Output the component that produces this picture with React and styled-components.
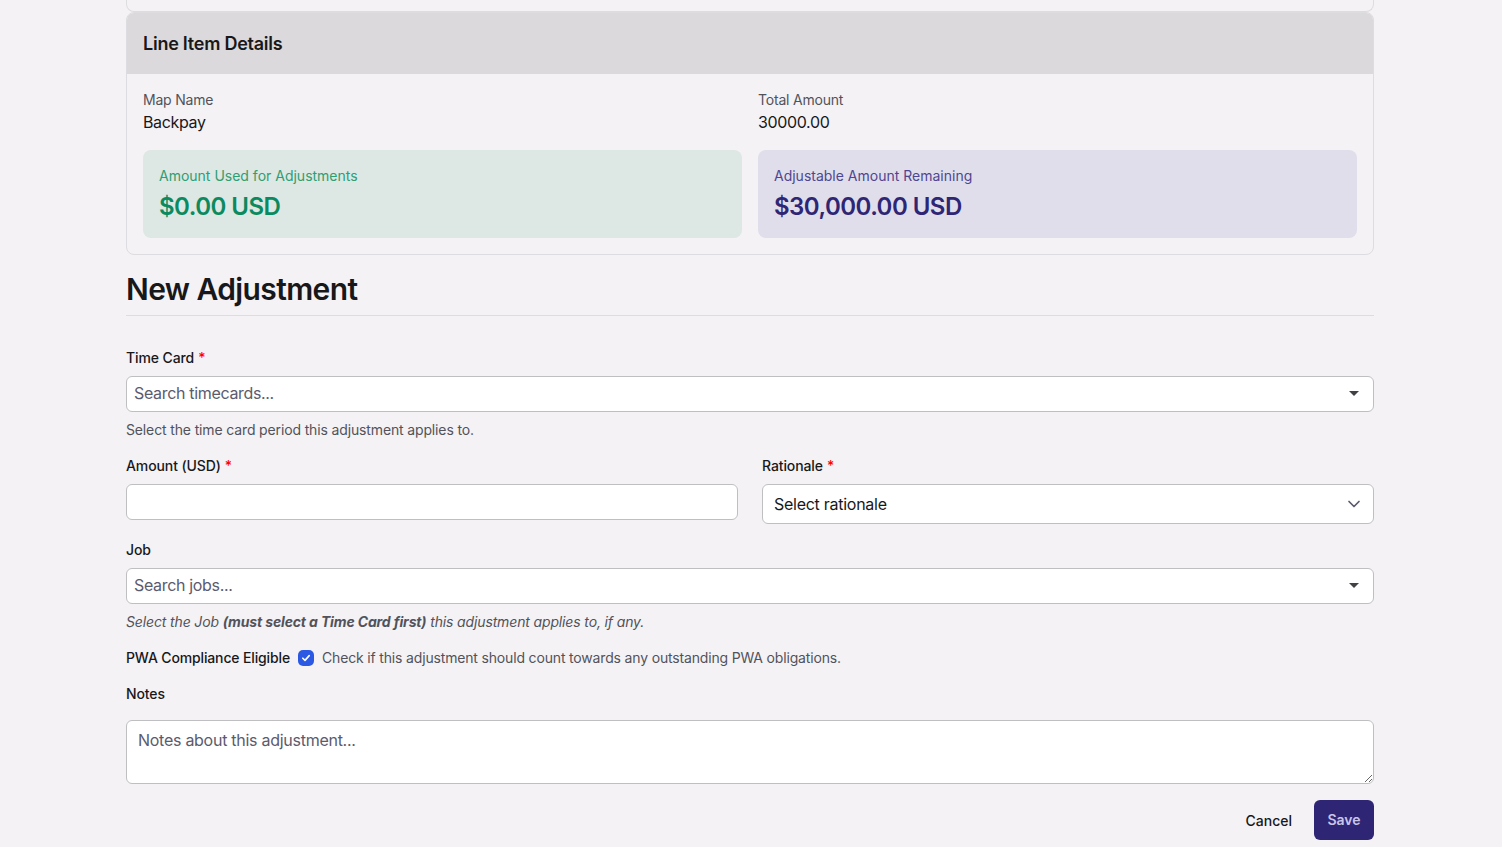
import React from 'react';
import styled, { createGlobalStyle } from 'styled-components';

const GlobalStyle = createGlobalStyle`
  html, body {
    margin: 0;
    padding: 0;
    background: #f4f2f5;
    overflow: hidden;
  }
  * {
    box-sizing: border-box;
  }
  body {
    font-family: Inter, "Liberation Sans", sans-serif;
    color: #18181b;
  }
`;

const Page = styled.div`
  width: 1248px;
  height: 847px;
  margin: 0 auto;
  transform: translateX(-1px);
`;

const CardStub = styled.div`
  height: 12px;
  border: 1px solid #dddce0;
  border-top: none;
  border-radius: 0 0 8px 8px;
`;

const Card = styled.section`
  border: 1px solid #dddce0;
  border-radius: 8px;
  overflow: hidden;
`;

const CardHeader = styled.header`
  height: 61px;
  display: flex;
  align-items: center;
  padding: 0 16px;
  background: #dbd9dc;
  font-size: 18px;
  font-weight: 600;
  letter-spacing: -0.25px;
  color: #18181b;
`;

const CardBody = styled.div`
  padding: 16px;
  display: grid;
  grid-template-columns: 1fr 1fr;
  gap: 16px;
`;

const Field = styled.div`
  display: flex;
  flex-direction: column;
`;

const FieldName = styled.span`
  font-size: 14px;
  line-height: 20px;
  letter-spacing: -0.2px;
  color: #52525b;
`;

const FieldValue = styled.span`
  font-size: 16px;
  line-height: 24px;
  letter-spacing: -0.35px;
  color: #18181b;
`;

const Stat = styled.div`
  height: 88px;
  padding: 16px;
  border-radius: 8px;
  display: flex;
  flex-direction: column;
  gap: 5px;
  background: ${(p) => (p.$tone === 'green' ? '#dde7e3' : '#e0deea')};
`;

const StatLabel = styled.span`
  font-size: 14px;
  line-height: 20px;
  color: ${(p) => (p.$tone === 'green' ? '#2f9e72' : '#4f4692')};
`;

const StatValue = styled.span`
  font-size: 24px;
  line-height: 32px;
  font-weight: 600;
  letter-spacing: -0.53px;
  color: ${(p) => (p.$tone === 'green' ? '#0b8a5f' : '#2e2675')};
`;

const Title = styled.h2`
  margin: 16px 0 0;
  padding-bottom: 8px;
  border-bottom: 1px solid #dddce0;
  font-size: 30px;
  line-height: 36px;
  font-weight: 600;
  letter-spacing: -0.6px;
  color: #18181b;
`;

const Form = styled.form`
  display: flex;
  flex-direction: column;
  padding-top: 32px;
`;

const Label = styled.label`
  display: block;
  font-size: 14px;
  line-height: 20px;
  font-weight: 500;
  letter-spacing: -0.1px;
  color: #18181b;
  margin-bottom: ${(p) => p.$gap ?? 8}px;
`;

const CheckLabel = styled(Label)`
  letter-spacing: -0.14px;
`;

const Required = styled.span`
  color: #f00;
  margin-left: 4px;
`;

const SearchBox = styled.div`
  position: relative;
  height: 36px;
  background: #fff;
  border: 1px solid #bfbfc2;
  border-radius: 6px;
`;

const SearchInput = styled.input`
  width: 100%;
  height: 100%;
  padding: 0 36px 2px 7px;
  border: none;
  border-radius: 6px;
  background: transparent;
  outline: none;
  font-family: inherit;
  font-size: 16px;
  letter-spacing: -0.33px;
  color: #18181b;
  &::placeholder {
    color: #5b5b6e;
    opacity: 1;
  }
`;

const Caret = styled.span`
  position: absolute;
  right: 14px;
  top: 14px;
  width: 0;
  height: 0;
  border-left: 5px solid transparent;
  border-right: 5px solid transparent;
  border-top: 5px solid #404045;
`;

const Help = styled.p`
  margin: 8px 0 16px;
  font-size: 14px;
  line-height: 20px;
  letter-spacing: -0.14px;
  color: #52525b;
  font-style: ${(p) => (p.$italic ? 'italic' : 'normal')};
  strong {
    font-weight: 700;
  }
`;

const TwoColumns = styled.div`
  display: grid;
  grid-template-columns: 1fr 1fr;
  gap: 24px;
  margin-bottom: 16px;
`;

const TextInput = styled.input`
  display: block;
  width: 100%;
  height: 36px;
  background: #fff;
  border: 1px solid #bfbfc2;
  border-radius: 6px;
  outline: none;
`;

const SelectBox = styled.div`
  height: 40px;
  display: flex;
  align-items: center;
  justify-content: space-between;
  padding: 0 9px 0 11px;
  background: #fff;
  border: 1px solid #bfbfc2;
  border-radius: 6px;
  font-size: 16px;
  letter-spacing: -0.27px;
  color: #18181b;
`;

const CheckRow = styled.div`
  display: flex;
  align-items: center;
  gap: 8px;
  height: 20px;
  margin-bottom: 16px;
`;

const CheckBox = styled.span`
  width: 16px;
  height: 16px;
  display: flex;
  align-items: center;
  justify-content: center;
  background: #2b59e3;
  border-radius: 5px;
`;

const CheckHint = styled.span`
  font-size: 14px;
  line-height: 20px;
  letter-spacing: -0.165px;
  color: #52525b;
`;

const TextArea = styled.textarea`
  display: block;
  width: 100%;
  height: 64px;
  padding: 7px 11px;
  background: #fff;
  border: 1px solid #bfbfc2;
  border-radius: 6px;
  outline: none;
  font-family: inherit;
  font-size: 16px;
  line-height: 24px;
  letter-spacing: -0.27px;
  &::placeholder {
    color: #5b5b6e;
    opacity: 1;
  }
`;

const Actions = styled.div`
  display: flex;
  justify-content: flex-end;
  align-items: center;
  gap: 8px;
  margin-top: 16px;
`;

const CancelButton = styled.button`
  height: 40px;
  padding: 0 14px;
  border: none;
  background: transparent;
  font-family: inherit;
  font-size: 14px;
  font-weight: 500;
  color: #18181b;
`;

const SaveButton = styled.button`
  width: 60px;
  height: 40px;
  padding: 0 0 2px;
  border: none;
  border-radius: 6px;
  background: #2e2675;
  font-family: inherit;
  font-size: 14px;
  font-weight: 600;
  color: #c9c5ea;
`;

const Chevron = () => (
  <svg width="20" height="20" viewBox="0 0 20 20" fill="none">
    <path d="M5 7.5 10 12.5l5-5" stroke="#5b5b6e" strokeWidth="1.7" strokeLinecap="round" strokeLinejoin="round" />
  </svg>
);

const Tick = () => (
  <svg width="10" height="10" viewBox="0 0 10 10" fill="none">
    <path d="M1.8 5.2 4 7.4l4.2-4.8" stroke="#fff" strokeWidth="1.6" strokeLinecap="round" strokeLinejoin="round" />
  </svg>
);

const App = () => (
  <>
    <GlobalStyle />
    <Page>
      <CardStub />
      <Card>
        <CardHeader>Line Item Details</CardHeader>
        <CardBody>
          <Field>
            <FieldName>Map Name</FieldName>
            <FieldValue>Backpay</FieldValue>
          </Field>
          <Field>
            <FieldName>Total Amount</FieldName>
            <FieldValue>30000.00</FieldValue>
          </Field>
          <Stat $tone="green">
            <StatLabel $tone="green">Amount Used for Adjustments</StatLabel>
            <StatValue $tone="green">$0.00 USD</StatValue>
          </Stat>
          <Stat $tone="purple">
            <StatLabel $tone="purple">Adjustable Amount Remaining</StatLabel>
            <StatValue $tone="purple">$30,000.00 USD</StatValue>
          </Stat>
        </CardBody>
      </Card>

      <Title>New Adjustment</Title>
      <Form onSubmit={(e) => e.preventDefault()}>
        <Label>Time Card<Required>*</Required></Label>
        <SearchBox>
          <SearchInput placeholder="Search timecards..." />
          <Caret />
        </SearchBox>
        <Help>Select the time card period this adjustment applies to.</Help>

        <TwoColumns>
          <div>
            <Label>Amount (USD)<Required>*</Required></Label>
            <TextInput />
          </div>
          <div>
            <Label>Rationale<Required>*</Required></Label>
            <SelectBox>
              Select rationale
              <Chevron />
            </SelectBox>
          </div>
        </TwoColumns>

        <Label>Job</Label>
        <SearchBox>
          <SearchInput placeholder="Search jobs..." />
          <Caret />
        </SearchBox>
        <Help $italic>
          Select the Job <strong>(must select a Time Card first)</strong> this adjustment applies to, if any.
        </Help>

        <CheckRow>
          <CheckLabel $gap={0}>PWA Compliance Eligible</CheckLabel>
          <CheckBox><Tick /></CheckBox>
          <CheckHint>Check if this adjustment should count towards any outstanding PWA obligations.</CheckHint>
        </CheckRow>

        <Label $gap={16}>Notes</Label>
        <TextArea placeholder="Notes about this adjustment..." />

        <Actions>
          <CancelButton type="button">Cancel</CancelButton>
          <SaveButton type="submit">Save</SaveButton>
        </Actions>
      </Form>
    </Page>
  </>
);

export default App;
